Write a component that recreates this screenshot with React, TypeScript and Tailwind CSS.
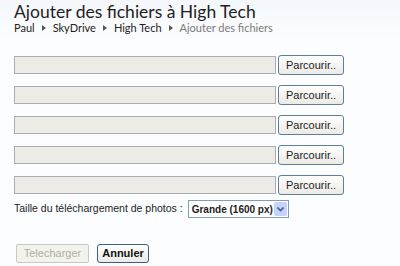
import React from "react";

const rows = [0, 1, 2, 3, 4];

function Arrow() {
  return (
    <svg width="4" height="6" viewBox="0 0 4 6" className="mx-[7px]"><path d="M0 0 L4 3 L0 6 Z" fill="#555" /></svg>
  );
}

export default function App() {
  return (
    <div className="w-[400px] h-[266px] overflow-hidden bg-gradient-to-b from-[#f4f7fb] to-[#fcfdfe] to-[40px] pl-[14px]">
      <h1 className="text-[17.5px] leading-[22px] pt-[1px] text-[#1e1e1e]" style={{ fontFamily: "Lato, sans-serif" }}>
        Ajouter des fichiers à High Tech
      </h1>
      <div className="flex items-center text-[11px] leading-[12px] mt-[-1px] text-[#222]" style={{ fontFamily: "Lato, sans-serif" }}>
        <span>Paul</span>
        <Arrow />
        <span>SkyDrive</span>
        <Arrow />
        <span>High Tech</span>
        <Arrow />
        <span className="text-[#7a7a7a]">Ajouter des fichiers</span>
      </div>
      <div className="flex flex-col gap-[10px] mt-[21px]">
        {rows.map((r) => (
          <div key={r} className="flex items-center gap-[2px] h-[20px]">
            <div className="w-[262px] h-[18px] bg-[#ecebe6] border border-[#a8adb4]" />
            <button className="w-[66px] h-[20px] rounded-[3px] border border-[#5f7d9c] bg-gradient-to-b from-[#ffffff] to-[#ebeae4] text-[11px] text-[#222] leading-none" style={{ fontFamily: "'Liberation Sans', sans-serif" }}>
              Parcourir..
            </button>
          </div>
        ))}
      </div>
      <div className="flex items-center mt-[5px] text-[10.5px] text-[#222] whitespace-nowrap" style={{ fontFamily: "'Liberation Sans', sans-serif" }}>
        <span>Taille du téléchargement de photos :</span>
        <div className="ml-[5px] flex items-center justify-between w-[101px] h-[18px] border border-[#7f9db9] bg-white">
          <span className="pl-[3px] text-[10px] font-bold">Grande (1600 px)</span>
          <div className="w-[13px] h-[14px] mr-[1px] bg-[#c3d3fd] flex items-center justify-center rounded-[2px]">
            <svg width="7" height="5" viewBox="0 0 7 5"><path d="M0.5 0.5 L3.5 3.5 L6.5 0.5" stroke="#4d6185" strokeWidth="1.6" fill="none" /></svg>
          </div>
        </div>
      </div>
      <div className="flex items-center gap-[8px] mt-[26px] ml-[2px] text-[11px]" style={{ fontFamily: "'Liberation Sans', sans-serif" }}>
        <button className="w-[73px] h-[19px] rounded-[2px] border border-[#cac8bb] bg-[#f3f3ee] text-[#b0ae9f] leading-none">Telecharger</button>
        <button className="w-[52px] h-[19px] rounded-[3px] border border-[#3b5f8a] bg-gradient-to-b from-[#ffffff] to-[#ebeae4] text-[#111] font-bold leading-none">Annuler</button>
      </div>
    </div>
  );
}
